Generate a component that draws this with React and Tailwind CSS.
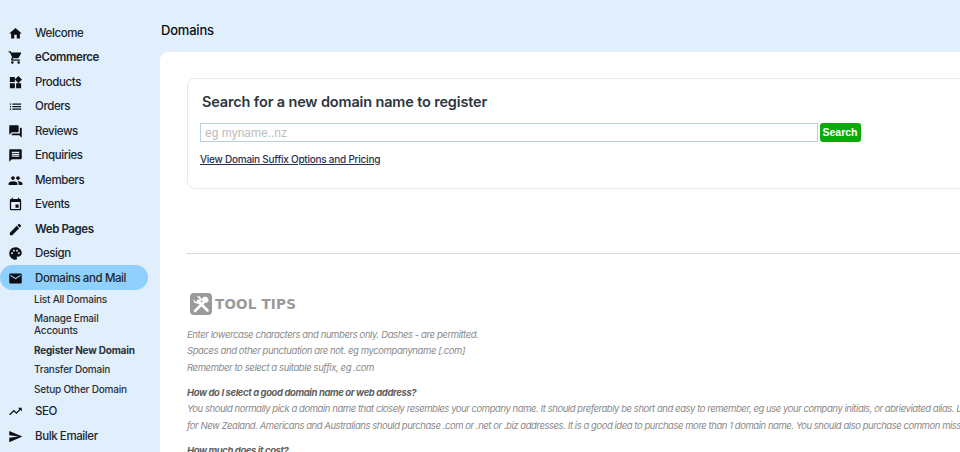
import React from 'react';
import {
  MdHome, MdShoppingCart, MdWidgets, MdList, MdQuestionAnswer, MdMessage, MdPeople,
  MdEvent, MdEdit, MdPalette, MdMail, MdTrendingUp, MdSend,
} from 'react-icons/md';

const topItems = [
  { label: 'Welcome', icon: MdHome },
  { label: 'eCommerce', icon: MdShoppingCart, strong: true },
  { label: 'Products', icon: MdWidgets },
  { label: 'Orders', icon: MdList },
  { label: 'Reviews', icon: MdQuestionAnswer },
  { label: 'Enquiries', icon: MdMessage },
  { label: 'Members', icon: MdPeople },
  { label: 'Events', icon: MdEvent },
  { label: 'Web Pages', icon: MdEdit, strong: true },
  { label: 'Design', icon: MdPalette },
];

const NavItem = ({ label, icon: Icon, active, strong }) => (
  <div className={`flex items-center h-[24.5px] pt-[2px] w-[148px] rounded-full ${active ? 'bg-[#8fd0ff]' : ''}`}>
    <Icon className="ml-2 w-[15px] h-[15px] shrink-0 text-[#0b0f14]" />
    <span className={`ml-[12px] text-[11.5px] tracking-[-0.4px] text-[#20262e] whitespace-nowrap ${strong ? 'font-semibold' : 'font-medium'}`}>{label}</span>
  </div>
);

const SubItem = ({ children, bold, className = '' }) => (
  <div className={`pl-[34px] pr-2 text-[10px] tracking-[-0.2px] leading-[12px] text-[#2a3038] ${bold ? 'font-bold' : 'font-medium'} ${className}`}>
    {children}
  </div>
);

const ToolIcon = () => (
  <svg viewBox="0 0 22 22" className="w-[22px] h-[22px] shrink-0">
    <rect width="22" height="22" rx="4" fill="#9a9a9a" />
    {/* wrench */}
    <path d="M8 8l9.500 9.500" stroke="#fff" strokeWidth="2.6" strokeLinecap="round" />
    <path d="M3.500 6.500L6 9l2.500-.5L9.500 6 7 3.500c2.500-.8 5 1 4.500 4L9 10.500c-3 .8-6-1.200-5.500-4z" fill="#fff" />
    {/* hammer */}
    <path d="M14.500 8.500L5 18" stroke="#fff" strokeWidth="2.6" strokeLinecap="round" />
    <path d="M11 6.500l2.500-2.500c2-.5 3.500 0 5 1.500l-1 .5 1.500 1.500-2.500 2.500-1.500-1.500-1 1z" fill="#fff" />
  </svg>
);

const App = () => (
  <div className="w-[960px] h-[452px] overflow-hidden flex bg-[#e1eefc] font-['Inter',sans-serif]">
    {/* Sidebar */}
    <nav className="w-[160px] shrink-0 pt-5">
      {topItems.map(item => <NavItem key={item.label} {...item} />)}
      <NavItem label="Domains and Mail" icon={MdMail} active />
      <div className="flex flex-col pt-[3px]">
        <SubItem>List All Domains</SubItem>
        <SubItem className="pt-[7px]">Manage Email<br />Accounts</SubItem>
        <SubItem bold className="pt-[8px]">Register New Domain</SubItem>
        <SubItem className="pt-[7px]">Transfer Domain</SubItem>
        <SubItem className="pt-[8px]">Setup Other Domain</SubItem>
      </div>
      <div className="pt-1">
        <NavItem label="SEO" icon={MdTrendingUp} />
        <NavItem label="Bulk Emailer" icon={MdSend} />
      </div>
    </nav>

    {/* Main */}
    <main className="flex-1 min-w-0 flex flex-col">
      <h1 className="h-[52px] pt-[21px] pl-px text-[13px] tracking-[-0.2px] leading-[18px] font-medium text-[#0b0f14]">Domains</h1>
      <div className="flex-1 bg-white rounded-tl-[8px] pl-[26px] pt-[26px] overflow-hidden">
        {/* Search card */}
        <section className="w-[1000px] ml-px h-[111px] border border-[#e6e8ea] rounded-[8px] pl-[12px] pt-[13px]">
          <h2 className="pl-[2px] text-[14.5px] tracking-[-0.15px] leading-[20px] font-semibold text-[#2c3640]">Search for a new domain name to register</h2>
          <div className="flex gap-[1.500px] mt-[11px]">
            <input
              readOnly
              placeholder="eg myname..nz"
              className="w-[618px] h-[19px] border border-[#b9cfe3] px-1 text-[12px] font-['Liberation_Sans',sans-serif] outline-none placeholder:text-[#bcbcbc]"
            />
            <button className="w-[41px] h-[19px] rounded-[3px] bg-[#0aaa0a] text-white text-[10.5px] font-bold font-['Liberation_Sans',sans-serif]">Search</button>
          </div>
          <a className="block mt-[10px] text-[10px] tracking-[-0.25px] leading-[14px] font-medium text-[#2a3050] underline whitespace-nowrap">View Domain Suffix Options and Pricing</a>
        </section>

        <hr className="w-[1000px] mt-[64px] border-t border-[#d8dadc]" />

        {/* Tool tips */}
        <div className="flex items-center mt-[39px] ml-[4px] gap-[3px]">
          <ToolIcon />
          <span className="font-['DejaVu_Sans',sans-serif] font-bold text-[13.5px] tracking-[0.2px] text-[#9a9a9a]">TOOL TIPS</span>
        </div>
        <div className="mt-[11.500px] ml-px text-[9.5px] tracking-[-0.4px] italic text-[#8a8a8a] whitespace-nowrap">
          <p className="leading-[16.5px]">Enter lowercase characters and numbers only. Dashes - are permitted.</p>
          <p className="leading-[16.5px]">Spaces and other punctuation are not. eg mycompanyname [.com]</p>
          <p className="leading-[16.5px]">Remember to select a suitable suffix, eg .com</p>
          <p className="mt-[9px] leading-[16px] font-bold text-[#5f5f5f]">How do I select a good domain name or web address?</p>
          <p className="leading-[16.5px] tracking-[-0.45px]">You should normally pick a domain name that closely resembles your company name. It should preferably be short and easy to remember, eg use your company initials, or abrieviated alias. Look for</p>
          <p className="leading-[16.5px] tracking-[-0.45px]">for New Zealand. Americans and Australians should purchase .com or .net or .biz addresses. It is a good idea to purchase more than 1 domain name. You should also purchase common misspellings</p>
          <p className="mt-[9px] leading-[16px] font-bold text-[#5f5f5f]">How much does it cost?</p>
        </div>
      </div>
    </main>
  </div>
);

export default App;
